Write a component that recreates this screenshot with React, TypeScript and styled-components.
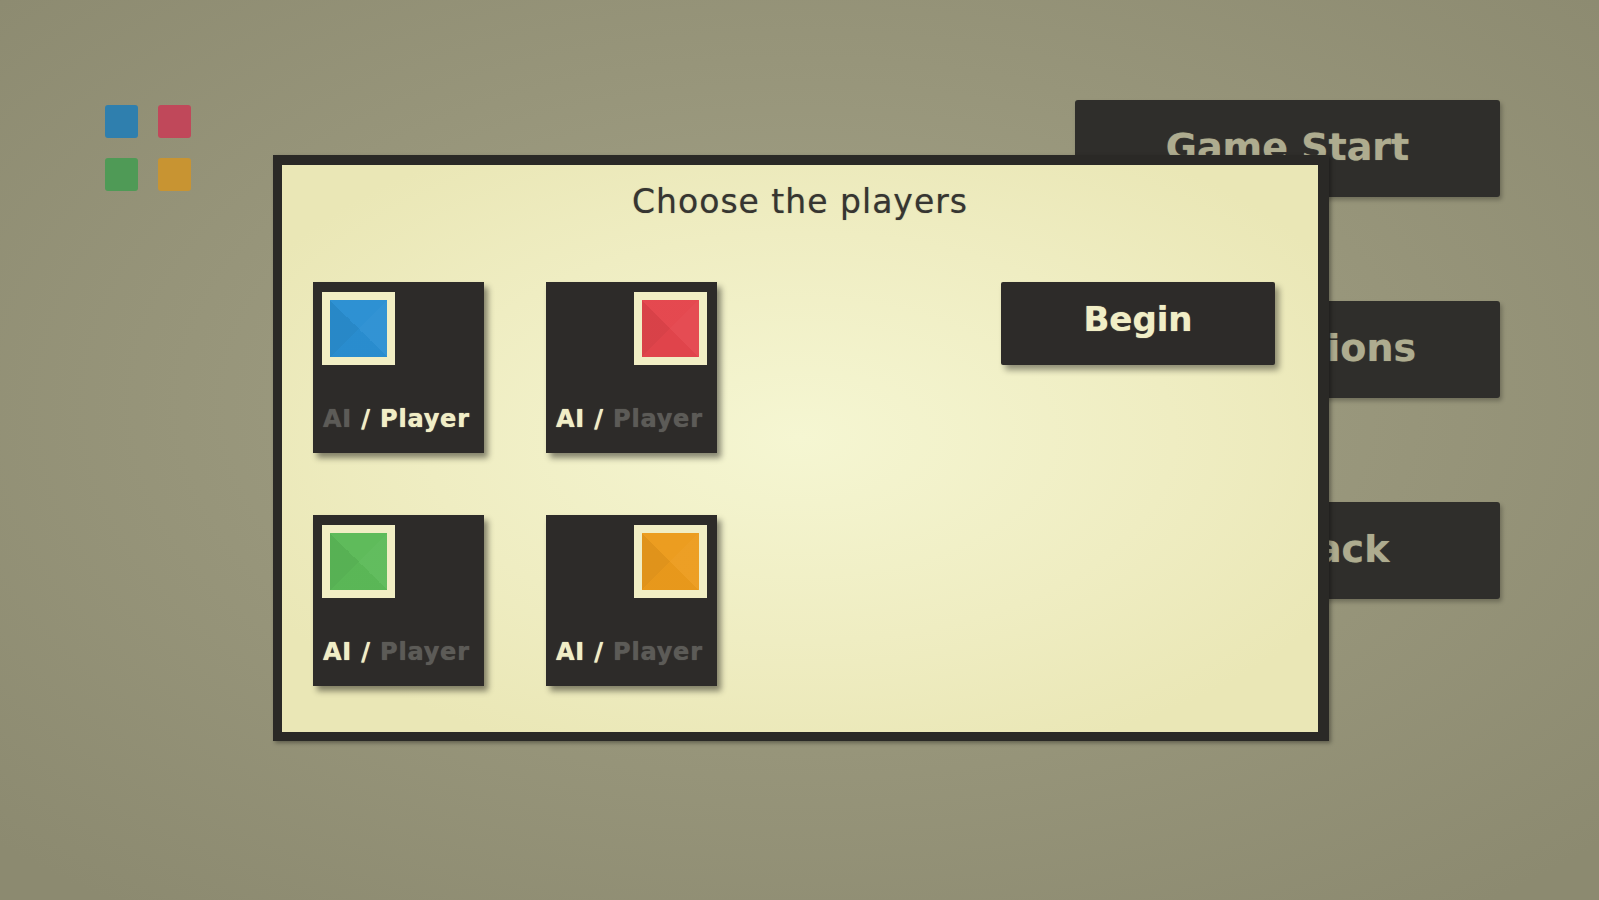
import React from "react";
import styled, { createGlobalStyle } from "styled-components";

const GlobalStyle = createGlobalStyle`
  html, body {
    margin: 0;
    padding: 0;
    width: 100%;
    height: 100%;
    overflow: hidden;
  }
  body {
    font-family: "DejaVu Sans", Verdana, sans-serif;
  }
`;

// full screen backdrop, the main menu sits on it
const Screen = styled.div`
  position: relative;
  width: 1599px;
  height: 900px;
  box-sizing: border-box;
  padding: 100px 99px 0 105px;
  display: flex;
  justify-content: space-between;
  align-items: flex-start;
  background: radial-gradient(ellipse 70% 70% at 50% 45%, #a4a388 0%, #97957a 55%, #8c8a70 100%);
`;

const Logo = styled.div`
  margin-top: 5px;
  display: grid;
  grid-template-columns: 33px 33px;
  grid-auto-rows: 33px;
  gap: 20px;
`;

const LogoTile = styled.div<{ $color: string }>`
  background: ${(p) => p.$color};
  border-radius: 3px;
`;

const Menu = styled.nav`
  width: 425px;
  display: flex;
  flex-direction: column;
  gap: 104px;
`;

const MenuButton = styled.div`
  height: 97px;
  box-sizing: border-box;
  padding-bottom: 4px;
  display: flex;
  align-items: center;
  justify-content: center;
  background: #2f2e2b;
  border-radius: 3px;
  box-shadow: 2px 3px 4px rgba(0, 0, 0, 0.25);
  color: #aeac8f;
  font-weight: bold;
  font-size: 38px;
  line-height: 1;
  white-space: nowrap;
  text-shadow: 0 0 1px rgba(174, 172, 143, 0.6);
`;

// the modal that lies over the menu
const Dialog = styled.section`
  position: absolute;
  left: 273px;
  top: 155px;
  width: 1056px;
  height: 586px;
  box-sizing: border-box;
  border: 9px solid #2a2926;
  border-right-width: 11px;
  border-top-width: 10px;
  box-shadow: 2px 2px 4px rgba(0, 0, 0, 0.35);
  background: radial-gradient(ellipse 60% 60% at 50% 48%, #f5f6d2 0%, #efedc2 60%, #eae7b6 100%);
  padding-top: 20px;
  display: flex;
  flex-direction: column;
`;

const Title = styled.h2`
  margin: 0;
  text-align: center;
  font-weight: normal;
  font-size: 33px;
  line-height: 1;
  letter-spacing: 1px;
  color: #363531;
  text-shadow: 0 0 1px rgba(54, 53, 49, 0.5);
`;

const Body = styled.div`
  margin-top: 64px;
  padding: 0 43px 0 31px;
  display: flex;
  justify-content: space-between;
  align-items: flex-start;
`;

const Players = styled.div`
  display: grid;
  grid-template-columns: 171px 171px;
  grid-auto-rows: 171px;
  column-gap: 62px;
  row-gap: 62px;
`;

const Card = styled.div<{ $side: "left" | "right" }>`
  box-sizing: border-box;
  padding: 10px ${(p) => (p.$side === "right" ? "10px" : "9px")} 22px 9px;
  background: #2d2b29;
  box-shadow: 4px 5px 6px rgba(0, 0, 0, 0.45);
  display: flex;
  flex-direction: column;
  justify-content: space-between;
  align-items: ${(p) => (p.$side === "left" ? "flex-start" : "flex-end")};
`;

const Swatch = styled.div<{ $color: string }>`
  width: 73px;
  height: 73px;
  box-sizing: border-box;
  border: 8px solid #f1eec4;
  background:
    conic-gradient(
      from 45deg,
      rgba(255, 255, 255, 0.04) 0deg 90deg,
      rgba(0, 0, 0, 0.02) 90deg 180deg,
      rgba(0, 0, 0, 0.05) 180deg 270deg,
      rgba(255, 255, 255, 0.02) 270deg 360deg
    ),
    ${(p) => p.$color};
`;

const Mode = styled.div`
  align-self: flex-start;
  padding-left: 1px;
  font-weight: bold;
  font-size: 24px;
  line-height: 1;
  letter-spacing: 0.8px;
  white-space: nowrap;
  color: #f1eec6;
  text-shadow: 0 0 1px currentColor;
`;

const ModeOption = styled.span<{ $on: boolean }>`
  color: ${(p) => (p.$on ? "#f1eec6" : "#5c5b57")};
`;

const BeginButton = styled.button`
  width: 274px;
  height: 83px;
  box-sizing: border-box;
  padding: 0 0 10px;
  border: 0;
  border-radius: 2px;
  background: #2d2b29;
  box-shadow: 4px 5px 6px rgba(0, 0, 0, 0.4);
  color: #f1eec6;
  font-family: "DejaVu Sans", Verdana, sans-serif;
  font-weight: bold;
  font-size: 34px;
  line-height: 1;
  text-shadow: 0 0 1px rgba(241, 238, 198, 0.7);
  cursor: pointer;
`;

interface IPlayer {
  color: string;
  side: "left" | "right";
  human: boolean;
}

const players: IPlayer[] = [
  { color: "#2a8fd2", side: "left", human: true },
  { color: "#e4454c", side: "right", human: false },
  { color: "#5cba58", side: "left", human: false },
  { color: "#ec9b1c", side: "right", human: false },
];

const App: React.FC = () => (
  <>
    <GlobalStyle />
    <Screen>
      <Logo>
        <LogoTile $color="#2f7fae" />
        <LogoTile $color="#c0485a" />
        <LogoTile $color="#4f9a56" />
        <LogoTile $color="#c89432" />
      </Logo>
      <Menu>
        <MenuButton>Game Start</MenuButton>
        <MenuButton>Instructions</MenuButton>
        <MenuButton>Feedback</MenuButton>
      </Menu>

      <Dialog>
        <Title>Choose the players</Title>
        <Body>
          <Players>
            {players.map((player, index) => (
              <Card key={index} $side={player.side}>
                <Swatch $color={player.color} />
                <Mode>
                  <ModeOption $on={!player.human}>AI</ModeOption> /{" "}
                  <ModeOption $on={player.human}>Player</ModeOption>
                </Mode>
              </Card>
            ))}
          </Players>
          <BeginButton>Begin</BeginButton>
        </Body>
      </Dialog>
    </Screen>
  </>
);

export default App;
